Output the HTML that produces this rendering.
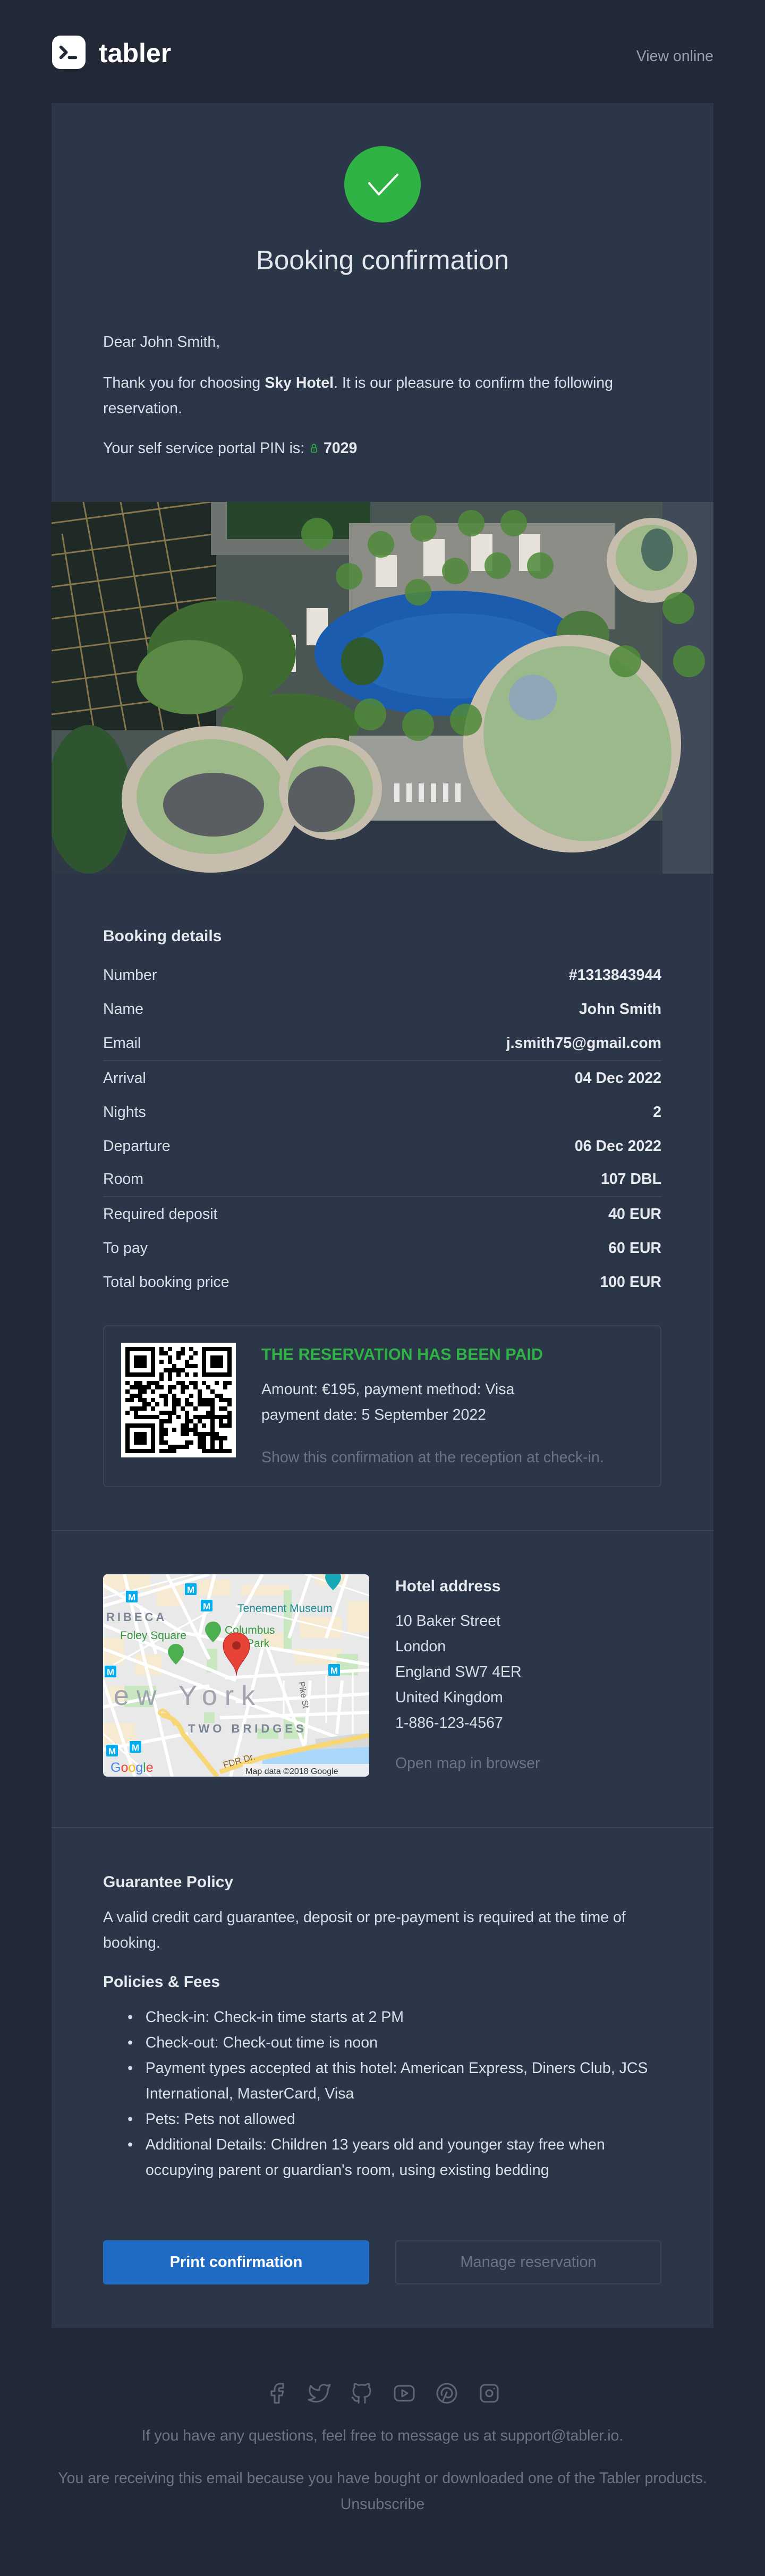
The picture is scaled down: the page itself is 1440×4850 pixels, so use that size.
<!DOCTYPE html>
<html><head><meta charset="utf-8">
<style>
*{margin:0;padding:0;box-sizing:border-box}
body{width:1440px;height:4850px;background:#222836;font-family:"Liberation Sans",sans-serif;color:#dadfe7;position:relative;overflow:hidden}
.a{position:absolute;white-space:nowrap}
.t{font-size:28.5px;line-height:48px}
.b{font-weight:bold;color:#e6e9ee}
.h{font-size:30px;line-height:48px;font-weight:bold;color:#e6e9ee}
.m{color:#6b7385}
.row{position:absolute;left:194px;width:1051px;font-size:28.5px;line-height:48px}
.row span{float:right;font-weight:bold;color:#e6e9ee}
.hr{position:absolute;height:2px;background:#3a4558}
</style></head><body>

<svg class="a" style="left:98px;top:67px" width="63" height="63" viewBox="0 0 64 64"><rect width="64" height="64" rx="16" fill="#fff"/><path d="M17 22l10 10-10 10" fill="none" stroke="#222836" stroke-width="6" stroke-linecap="round" stroke-linejoin="round"/><path d="M33 42h12" stroke="#222836" stroke-width="6" stroke-linecap="round"/></svg>
<div class="a" style="left:186px;top:70px;font-size:50px;line-height:60px;font-weight:bold;color:#fff">tabler</div>
<div class="a t" style="right:97px;top:82px;color:#9aa0ac">View online</div>

<div class="a" style="left:97px;top:194px;width:1246px;height:4189px;background:#2b3648"></div>

<svg class="a" style="left:648px;top:275px" width="144" height="144" viewBox="0 0 144 144"><circle cx="72" cy="72" r="72" fill="#2fb344"/><path d="M47 70l18 21 35-37" fill="none" stroke="#fff" stroke-width="4" stroke-linecap="round" stroke-linejoin="round"/></svg>
<div class="a" style="left:97px;width:1246px;top:460px;text-align:center;font-size:51px;line-height:60px;color:#e3e6eb">Booking confirmation</div>

<div class="a t" style="left:194px;top:620px">Dear John Smith,</div>
<div class="a t" style="left:194px;top:697px">Thank you for choosing <b class="b">Sky Hotel</b>. It is our pleasure to confirm the following<br>reservation.</div>
<div class="a t" style="left:194px;top:820px">Your self service portal PIN is: <svg width="20" height="24" viewBox="0 0 24 24" style="vertical-align:-3px"><rect x="6" y="11" width="12" height="10" rx="2" fill="none" stroke="#2fb344" stroke-width="2"/><circle cx="12" cy="16" r="1.2" fill="#2fb344"/><path d="M8 11V7a4 4 0 0 1 8 0v4" fill="none" stroke="#2fb344" stroke-width="2"/></svg> <b class="b">7029</b></div>

<svg class="a" style="left:97px;top:945px" width="1246" height="700" viewBox="0 0 1246 700">
<rect width="1246" height="700" fill="#4a5654"/>
<rect x="0" y="600" width="1246" height="100" fill="#2e3846"/>
<rect x="1150" y="0" width="96" height="700" fill="#404a58"/>
<rect x="0" y="0" width="310" height="430" fill="#1f2a26"/>
<g stroke="#a08a55" stroke-width="3" opacity=".8"><path d="M0 40L300 0M0 100L310 60M0 160L310 120M0 220L310 180M0 280L310 240M0 340L310 300M0 400L310 360"/><path d="M60 0L140 430M130 0L210 430M200 0L280 430M20 60L80 430"/></g>
<rect x="300" y="0" width="300" height="100" fill="#6d7470"/>
<path d="M330 0h270v70h-270z" fill="#26452a"/>
<rect x="560" y="40" width="500" height="200" fill="#8c8d86"/>
<g fill="#e6e2da"><rect x="610" y="100" width="40" height="60"/><rect x="700" y="70" width="40" height="70"/><rect x="790" y="60" width="40" height="70"/><rect x="880" y="60" width="40" height="70"/><rect x="480" y="200" width="40" height="70"/><rect x="420" y="250" width="40" height="70"/></g>
<ellipse cx="750" cy="285" rx="255" ry="118" fill="#1b5cae"/>
<ellipse cx="760" cy="290" rx="200" ry="80" fill="#2a6fc0" opacity=".6"/>
<ellipse cx="320" cy="285" rx="140" ry="100" fill="#3f6b32"/>
<ellipse cx="260" cy="330" rx="100" ry="70" fill="#5a8a45"/>
<ellipse cx="450" cy="420" rx="130" ry="60" fill="#3f6b32"/>
<ellipse cx="585" cy="300" rx="40" ry="45" fill="#2f5a2f"/>
<ellipse cx="1000" cy="250" rx="50" ry="45" fill="#4c7a40"/>
<ellipse cx="70" cy="560" rx="80" ry="140" fill="#2e5530"/>
<rect x="560" y="440" width="360" height="160" fill="#9a9c98"/>
<g fill="#e8e8e8"><rect x="645" y="530" width="10" height="35"/><rect x="668" y="530" width="10" height="35"/><rect x="691" y="530" width="10" height="35"/><rect x="714" y="530" width="10" height="35"/><rect x="737" y="530" width="10" height="35"/><rect x="760" y="530" width="10" height="35"/></g>
<ellipse cx="980" cy="455" rx="205" ry="205" transform="rotate(-35 980 455)" fill="#c9bfae"/>
<ellipse cx="990" cy="455" rx="170" ry="190" transform="rotate(-35 990 455)" fill="#9bb98a"/>
<ellipse cx="906" cy="368" rx="45" ry="43" fill="#8fa7b6"/>
<ellipse cx="300" cy="560" rx="168" ry="138" fill="#c7bdad"/>
<ellipse cx="300" cy="555" rx="140" ry="108" fill="#9db98a"/>
<ellipse cx="305" cy="570" rx="95" ry="60" fill="#5a5d62"/>
<ellipse cx="525" cy="540" rx="97" ry="96" fill="#c7bdad"/>
<ellipse cx="525" cy="540" rx="80" ry="82" fill="#9db98a"/>
<ellipse cx="508" cy="560" rx="63" ry="62" fill="#5a5d62"/>
<ellipse cx="1130" cy="110" rx="85" ry="80" fill="#c7bdad"/>
<ellipse cx="1130" cy="105" rx="68" ry="62" fill="#9db98a"/>
<ellipse cx="1140" cy="90" rx="30" ry="40" fill="#4e6e62"/>
<g fill="#4f8a3a" opacity=".85"><circle cx="620" cy="80" r="25"/><circle cx="700" cy="50" r="25"/><circle cx="790" cy="40" r="25"/><circle cx="870" cy="40" r="25"/><circle cx="560" cy="140" r="25"/><circle cx="690" cy="170" r="25"/><circle cx="760" cy="130" r="25"/><circle cx="840" cy="120" r="25"/><circle cx="920" cy="120" r="25"/><circle cx="600" cy="400" r="30"/><circle cx="690" cy="420" r="30"/><circle cx="780" cy="410" r="30"/><circle cx="1080" cy="300" r="30"/><circle cx="1200" cy="300" r="30"/><circle cx="1180" cy="200" r="30"/><circle cx="500" cy="60" r="30"/></g>
</svg>

<div class="a h" style="left:194px;top:1739px">Booking details</div>
<div class="row" style="top:1812px">Number<span>#1313843944</span></div>
<div class="row" style="top:1876px">Name<span>John Smith</span></div>
<div class="row" style="top:1940px">Email<span>j.smith75@gmail.com</span></div>
<div class="hr" style="left:194px;width:1051px;top:1996px"></div>
<div class="row" style="top:2006px">Arrival<span>04 Dec 2022</span></div>
<div class="row" style="top:2070px">Nights<span>2</span></div>
<div class="row" style="top:2134px">Departure<span>06 Dec 2022</span></div>
<div class="row" style="top:2196px">Room<span>107 DBL</span></div>
<div class="hr" style="left:194px;width:1051px;top:2252px"></div>
<div class="row" style="top:2262px">Required deposit<span>40 EUR</span></div>
<div class="row" style="top:2326px">To pay<span>60 EUR</span></div>
<div class="row" style="top:2390px">Total booking price<span>100 EUR</span></div>

<div class="a" style="left:194px;top:2495px;width:1051px;height:305px;border:2px solid #3a4558;border-radius:8px"></div>
<svg class="a" style="left:228px;top:2528px" width="216" height="216" viewBox="-1 -1 27 27" shape-rendering="crispEdges">
<rect x="-1" y="-1" width="27" height="27" fill="#fff"/>
<g fill="#000">
<rect x="0" y="0" width="7" height="7"/><rect x="18" y="0" width="7" height="7"/><rect x="0" y="18" width="7" height="7"/>
</g>
<g fill="#fff"><rect x="1" y="1" width="5" height="5"/><rect x="19" y="1" width="5" height="5"/><rect x="1" y="19" width="5" height="5"/></g>
<g fill="#000"><rect x="2" y="2" width="3" height="3"/><rect x="20" y="2" width="3" height="3"/><rect x="2" y="20" width="3" height="3"/>
<path d="M8 0h1v1h-1zM10 0h1v1h-1zM13 0h1v1h-1zM15 0h1v1h-1z
M8 1h2v1h-2zM12 1h2v1h-2zM16 1h1v1h-1z
M10 2h1v1h-1zM12 2h1v1h-1zM15 2h1v1h-1z
M8 3h1v1h-1zM10 3h1v1h-1zM14 3h1v1h-1z
M11 4h1v1h-1zM14 4h3v1h-3z
M9 5h5v1h-5z
M8 6h1v1h-1zM10 6h1v1h-1zM12 6h1v1h-1zM14 6h1v1h-1zM16 6h1v1h-1z
M8 7h1v1h-1zM10 7h1v1h-1z
M0 8h1v1h-1zM2 8h2v1h-2zM5 8h3v1h-3zM12 8h2v1h-2zM15 8h2v1h-2zM18 8h1v1h-1zM21 8h1v1h-1zM23 8h2v1h-2z
M1 9h5v1h-5zM7 9h2v1h-2zM10 9h2v1h-2zM13 9h2v1h-2zM16 9h1v1h-1zM19 9h1v1h-1zM23 9h1v1h-1z
M0 10h1v1h-1zM3 10h2v1h-2zM6 10h1v1h-1zM10 10h1v1h-1zM13 10h1v1h-1zM17 10h1v1h-1zM20 10h1v1h-1z
M1 11h3v1h-3zM8 11h2v1h-2zM11 11h1v1h-1zM15 11h1v1h-1zM17 11h1v1h-1zM21 11h2v1h-2z
M0 12h2v1h-2zM3 12h2v1h-2zM6 12h1v1h-1zM9 12h1v1h-1zM11 12h2v1h-2zM14 12h1v1h-1zM17 12h4v1h-4zM22 12h3v1h-3z
M4 13h2v1h-2zM7 13h1v1h-1zM9 13h1v1h-1zM11 13h2v1h-2zM14 13h2v1h-2zM17 13h4v1h-4zM24 13h1v1h-1z
M1 14h4v1h-4zM6 14h1v1h-1zM11 14h1v1h-1zM13 14h1v1h-1zM16 14h1v1h-1zM20 14h1v1h-1zM22 14h2v1h-2z
M0 15h1v1h-1zM2 15h1v1h-1zM8 15h4v1h-4zM14 15h1v1h-1zM19 15h2v1h-2zM24 15h1v1h-1z
M2 16h6v1h-6zM10 16h1v1h-1zM12 16h1v1h-1zM14 16h1v1h-1zM16 16h9v1h-9z
M8 17h3v1h-3zM14 17h2v1h-2zM17 17h1v1h-1zM20 17h1v1h-1zM22 17h1v1h-1zM24 17h1v1h-1z
M8 18h1v1h-1zM13 18h2v1h-2zM16 18h1v1h-1zM18 18h1v1h-1zM20 18h1v1h-1zM22 18h3v1h-3z
M8 19h2v1h-2zM11 19h1v1h-1zM13 19h4v1h-4zM20 19h1v1h-1z
M8 20h2v1h-2zM13 20h2v1h-2zM16 20h6v1h-6z
M8 21h1v1h-1zM17 21h2v1h-2zM20 21h4v1h-4z
M8 22h2v1h-2zM14 22h2v1h-2zM17 22h2v1h-2zM20 22h1v1h-1zM22 22h1v1h-1z
M10 23h5v1h-5zM17 23h2v1h-2zM20 23h1v1h-1zM22 23h1v1h-1z
M8 24h4v1h-4zM18 24h7v1h-7z"/></g>
</svg>
<div class="a" style="left:492px;top:2526px;font-size:30.5px;line-height:48px;font-weight:bold;color:#2fb344">THE RESERVATION HAS BEEN PAID</div>
<div class="a t" style="left:492px;top:2592px">Amount: €195, payment method: Visa</div>
<div class="a t" style="left:492px;top:2640px">payment date: 5 September 2022</div>
<div class="a t m" style="left:492px;top:2720px">Show this confirmation at the reception at check-in.</div>

<div class="hr" style="left:97px;width:1246px;top:2881px"></div>

<svg class="a" style="left:194px;top:2964px;border-radius:8px" width="501" height="381" viewBox="0 0 501 381">
<defs><clipPath id="c"><rect width="501" height="381" rx="8"/></clipPath></defs>
<g clip-path="url(#c)">
<rect width="501" height="381" fill="#e9e9ea"/>
<g fill="#f6ead2"><rect x="0" y="0" width="90" height="30"/><rect x="100" y="20" width="50" height="40"/><rect x="0" y="120" width="40" height="50"/><rect x="60" y="150" width="50" height="40"/><rect x="180" y="10" width="60" height="30"/><rect x="260" y="20" width="90" height="20"/><rect x="370" y="80" width="80" height="40"/><rect x="300" y="110" width="50" height="30"/><rect x="360" y="140" width="90" height="30"/><rect x="400" y="0" width="60" height="20"/><rect x="0" y="280" width="60" height="40"/><rect x="460" y="50" width="41" height="60"/><rect x="10" y="210" width="40" height="30"/></g>
<g fill="#c9e7c0"><rect x="195" y="140" width="20" height="45"/><rect x="340" y="30" width="15" height="110"/><rect x="440" y="150" width="40" height="40"/><rect x="40" y="210" width="60" height="40"/><rect x="340" y="270" width="40" height="40"/><rect x="290" y="290" width="40" height="20"/><rect x="190" y="260" width="20" height="20"/></g>
<g stroke="#fff" stroke-width="6" fill="none">
<path d="M0 20L150 110L380 150L501 170"/><path d="M0 95L250 200"/><path d="M0 140L501 330"/><path d="M40 0L130 381"/><path d="M120 0L200 160"/><path d="M210 0L180 120"/><path d="M300 140L240 381"/><path d="M310 140L400 381"/><path d="M0 250L200 210"/><path d="M230 195L501 180"/><path d="M250 240L501 225"/><path d="M220 270L501 260"/><path d="M0 330L160 300"/><path d="M390 0L350 120"/><path d="M300 0L240 110"/><path d="M460 0L420 120"/><path d="M450 200L440 300"/><path d="M390 200L380 320"/><path d="M0 60L200 0"/><path d="M0 200L60 381"/><path d="M70 60L100 150"/></g>
<g stroke="#fff" stroke-width="3" fill="none"><path d="M0 45L170 0M20 170L200 70M250 60L501 120M380 0L501 40M0 300L90 381M340 200L340 270M420 190L420 280M470 180L470 300"/></g>
<path d="M300 381L300 350L501 305L501 381Z" fill="#a9d8fb"/>
<path d="M400 310L480 300L501 300L501 325L400 330Z" fill="#d8d8d8"/>
<path d="M110 265Q140 270 150 300L215 381" fill="none" stroke="#f7d774" stroke-width="9"/>
<path d="M220 372L300 345L501 303" fill="none" stroke="#f7d774" stroke-width="9"/>
<path d="M110 265Q100 260 112 255Q125 260 135 285" fill="none" stroke="#f7d774" stroke-width="5"/>
<g font-family="Liberation Sans,sans-serif">
<text x="6" y="88" font-size="22" font-weight="bold" fill="#7b8598" letter-spacing="5">RIBECA</text>
<text x="32" y="122" font-size="21" fill="#34973a">Foley Square</text>
<text x="253" y="71" font-size="21" fill="#1b8d93">Tenement Museum</text>
<text x="229" y="112" font-size="21" fill="#34973a">Columbus</text>
<text x="270" y="137" font-size="21" fill="#34973a">Park</text>
<text x="20" y="246" font-size="52" fill="#9ea3ad" letter-spacing="14">ew York</text>
<text x="160" y="298" font-size="22" font-weight="bold" fill="#7b8598" letter-spacing="6">TWO BRIDGES</text>
<text x="0" y="0" font-size="16" fill="#666" transform="translate(368 203) rotate(80)">Pike St</text>
<text x="0" y="0" font-size="17" fill="#8a5a12" transform="translate(228 365) rotate(-16)">FDR Dr.</text>
<text x="14" y="372" font-size="25" fill="#4285f4">G<tspan fill="#ea4335">o</tspan><tspan fill="#fbbc05">o</tspan>g<tspan fill="#34a853">l</tspan><tspan fill="#ea4335">e</tspan></text>
<rect x="263" y="357" width="238" height="24" fill="#f2f2f2" opacity=".9"/>
<text x="268" y="376" font-size="16" fill="#333">Map data ©2018 Google</text>
</g>
<g fill="#00aeef"><rect x="43" y="31" width="22" height="22" rx="2"/><rect x="154" y="17" width="22" height="22" rx="2"/><rect x="184" y="48" width="22" height="22" rx="2"/><rect x="3" y="172" width="22" height="22" rx="2"/><rect x="424" y="169" width="22" height="22" rx="2"/><rect x="6" y="321" width="22" height="22" rx="2"/><rect x="50" y="314" width="22" height="22" rx="2"/></g>
<g fill="#fff" font-family="Liberation Sans,sans-serif" font-size="17" font-weight="bold"><text x="47" y="49">M</text><text x="158" y="35">M</text><text x="188" y="66">M</text><text x="7" y="190">M</text><text x="428" y="187">M</text><text x="10" y="339">M</text><text x="54" y="332">M</text></g>
<path d="M122 146a15 15 0 0 1 30 0c0 10-15 24-15 24s-15-14-15-24z" fill="#4caf50"/>
<path d="M192 104a15 15 0 0 1 30 0c0 10-15 24-15 24s-15-14-15-24z" fill="#4caf50"/>
<path d="M418 6a15 15 0 0 1 30 0c0 10-15 24-15 24s-15-14-15-24z" fill="#17a8b8"/>
<path d="M251 110c-14 0-25 11-25 25c0 22 25 35 25 56c0-21 25-34 25-56c0-14-11-25-25-25z" fill="#e74336" stroke="#b3261e" stroke-width="1"/>
<circle cx="251" cy="134" r="8" fill="#a52620"/>
</g></svg>

<div class="a h" style="left:744px;top:2963px">Hotel address</div>
<div class="a t" style="left:744px;top:3028px">10 Baker Street</div>
<div class="a t" style="left:744px;top:3076px">London</div>
<div class="a t" style="left:744px;top:3124px">England SW7 4ER</div>
<div class="a t" style="left:744px;top:3172px">United Kingdom</div>
<div class="a t" style="left:744px;top:3220px">1-886-123-4567</div>
<div class="a t m" style="left:744px;top:3296px">Open map in browser</div>

<div class="hr" style="left:97px;width:1246px;top:3440px"></div>

<div class="a h" style="left:194px;top:3520px">Guarantee Policy</div>
<div class="a t" style="left:194px;top:3586px">A valid credit card guarantee, deposit or pre-payment is required at the time of<br>booking.</div>
<div class="a h" style="left:194px;top:3708px">Policies &amp; Fees</div>
<div class="a t" style="left:240px;top:3774px">
<div>•&nbsp;&nbsp;&nbsp;Check-in: Check-in time starts at 2 PM</div>
<div>•&nbsp;&nbsp;&nbsp;Check-out: Check-out time is noon</div>
<div>•&nbsp;&nbsp;&nbsp;Payment types accepted at this hotel: American Express, Diners Club, JCS</div>
<div style="padding-left:34px">International, MasterCard, Visa</div>
<div>•&nbsp;&nbsp;&nbsp;Pets: Pets not allowed</div>
<div>•&nbsp;&nbsp;&nbsp;Additional Details: Children 13 years old and younger stay free when</div>
<div style="padding-left:34px">occupying parent or guardian's room, using existing bedding</div>
</div>

<div class="a" style="left:194px;top:4218px;width:501px;height:83px;background:#206bc4;border-radius:6px;color:#fff;font-size:29px;font-weight:bold;line-height:83px;text-align:center">Print confirmation</div>
<div class="a" style="left:744px;top:4218px;width:501px;height:83px;border:2px solid #3a4558;border-radius:6px;color:#6b7385;font-size:29px;line-height:79px;text-align:center">Manage reservation</div>

<svg class="a" style="left:497px;top:4482px" width="448" height="48" viewBox="0 0 224 24" fill="none" stroke="#5e6677" stroke-width="1.5" stroke-linecap="round" stroke-linejoin="round">
<g><path d="M7 10v4h3v7h4v-7h3l1 -4h-4v-2a1 1 0 0 1 1 -1h3v-4h-3a5 5 0 0 0 -5 5v2h-3"/></g>
<g transform="translate(40 0)"><path d="M22 4.01c-1 .49 -1.98 .689 -3 .99c-1.121 -1.265 -2.783 -1.335 -4.38 -.737s-2.643 2.06 -2.620 3.737v1c-3.245 .083 -6.135 -1.395 -8 -4c0 0 -4.182 7.433 4 11c-1.872 1.247 -3.739 2.088 -6 2c3.308 1.803 6.913 2.423 10.034 1.517c3.580 -1.04 6.522 -3.723 7.651 -7.742a13.840 13.840 0 0 0 .497 -3.753c0 -.249 1.510 -2.772 1.818 -4.013z"/></g>
<g transform="translate(80 0)"><path d="M9 19c-4.3 1.4 -4.3 -2.5 -6 -3m12 5v-3.5c0 -1 .1 -1.4 -.5 -2c2.8 -.3 5.5 -1.4 5.5 -6a4.6 4.6 0 0 0 -1.3 -3.2a4.2 4.2 0 0 0 -.1 -3.2s-1.1 -.3 -3.5 1.3a12.3 12.3 0 0 0 -6.2 0c-2.4 -1.6 -3.5 -1.3 -3.5 -1.3a4.2 4.2 0 0 0 -.1 3.2a4.6 4.6 0 0 0 -1.3 3.2c0 4.6 2.7 5.7 5.5 6c-.6 .6 -.6 1.2 -.5 2v3.5"/></g>
<g transform="translate(120 0)"><rect x="3" y="5" width="18" height="14" rx="4"/><path d="M10 9l5 3l-5 3z"/></g>
<g transform="translate(160 0)"><path d="M8 20l4 -9"/><path d="M10.7 14c.437 1.263 1.43 2 2.55 2c2.071 0 3.75 -1.554 3.75 -4a5 5 0 1 0 -9.7 1.7"/><circle cx="12" cy="12" r="9"/></g>
<g transform="translate(200 0)"><rect x="4" y="4" width="16" height="16" rx="4"/><circle cx="12" cy="12" r="3"/><path d="M16.5 7.5v.01"/></g>
</svg>

<div class="a t m" style="left:0;width:1440px;text-align:center;top:4562px">If you have any questions, feel free to message us at support@tabler.io.</div>
<div class="a t m" style="left:0;width:1440px;text-align:center;top:4642px">You are receiving this email because you have bought or downloaded one of the Tabler products.</div>
<div class="a t m" style="left:0;width:1440px;text-align:center;top:4691px">Unsubscribe</div>
</body></html>
